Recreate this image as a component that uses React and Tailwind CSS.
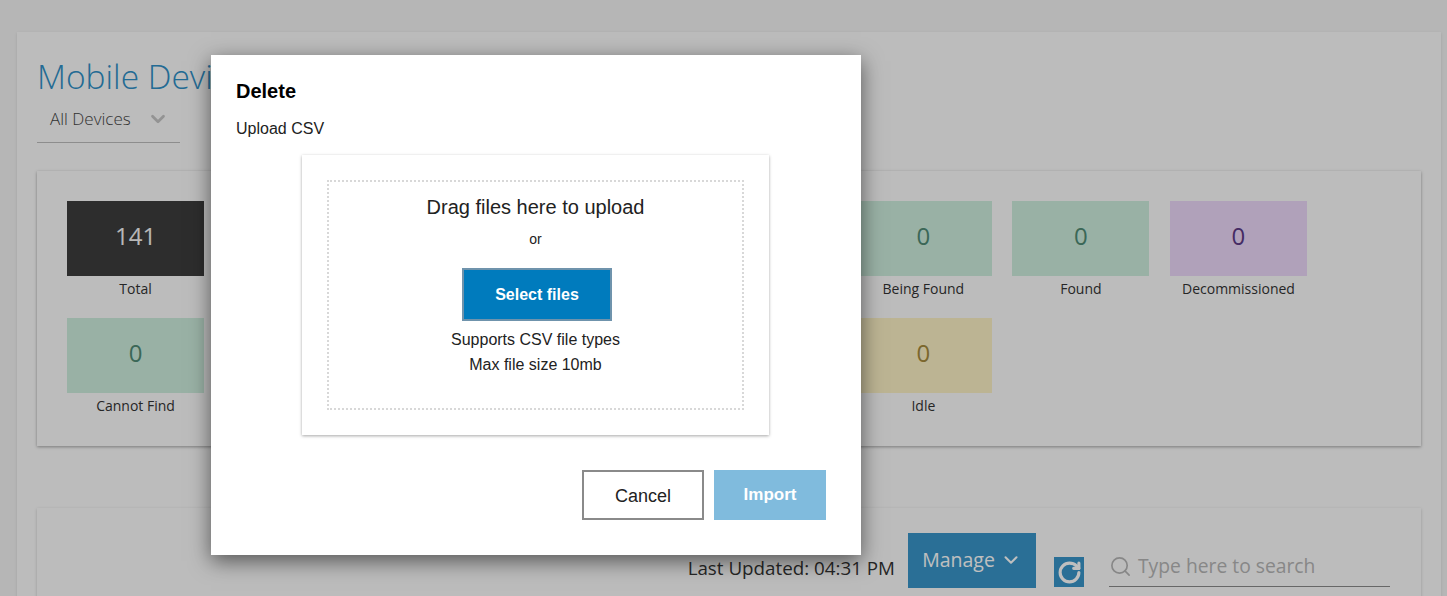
import React from "react";
import { ChevronDown, RotateCw, Search } from "lucide-react";

const tiles = [
  { label: "Total", value: "141", box: "bg-[#3c3c3c] text-[#f5f5f5]" },
  { label: "", value: "", box: "bg-[#cdeddd]" },
  { label: "", value: "", box: "bg-[#cdeddd]" },
  { label: "", value: "", box: "bg-[#cdeddd]" },
  { label: "", value: "", box: "bg-[#cdeddd]" },
  { label: "Being Found", value: "0", box: "bg-[#cdeddd] text-[#4f8a74]" },
  { label: "Found", value: "0", box: "bg-[#cdeddd] text-[#4f8a74]" },
  { label: "Decommissioned", value: "0", box: "bg-[#ebd7f9] text-[#5d3a86]" },
  { label: "Cannot Find", value: "0", box: "bg-[#cdeddd] text-[#4f8a74]" },
  { label: "", value: "", box: "bg-[#cdeddd]" },
  { label: "", value: "", box: "bg-[#cdeddd]" },
  { label: "", value: "", box: "bg-[#cdeddd]" },
  { label: "", value: "", box: "bg-[#cdeddd]" },
  { label: "Idle", value: "0", box: "bg-[#fbf1c5] text-[#a58a3c]" },
];

const Tile = ({ label, value, box }) => (
  <div className="flex flex-col items-center">
    <div className={`h-[75px] w-full flex items-center justify-center pb-[5px] text-[24px] ${box}`}>{value}</div>
    <div className="mt-[3px] h-[20px] text-[14px] leading-[20px] text-[#333333]">{label}</div>
  </div>
);

const App = () => {
  return (
    <div className="relative h-screen overflow-hidden bg-[#f3f3f3] pt-[32px] pl-[17px] pr-[6px] font-['Open_Sans',sans-serif]">
      <div className="h-[700px] bg-[#fbfbfb] px-[20px] pt-[24px] shadow-sm">
        <h1 className="h-[40px] text-[33.5px] font-light leading-[40px] text-[#2f8fc6]">Mobile Devices</h1>
        <div className="mt-[1px] flex h-[46px] w-[143px] items-center gap-[16px] border-b border-[#bdbdbd] pl-[13px] pb-[2px] text-[17px] font-light text-[#444444]">
          <span>All Devices</span>
          <ChevronDown className="h-[22px] w-[22px] text-[#c4c4c4]" strokeWidth={3} />
        </div>

        <div className="mt-[28px] h-[275px] bg-[#fbfbfb] pl-[30px] pt-[30px] pr-[114px] shadow-[0_1px_3px_rgba(0,0,0,0.35)]">
          <div className="grid grid-cols-8 gap-x-[20.5px] gap-y-[19px]">
            {tiles.map((tile, i) => (
              <Tile key={i} {...tile} />
            ))}
          </div>
        </div>

        <div className="mt-[62px] flex h-[200px] items-start justify-end bg-[#fbfbfb] pr-[31px] pt-[25px] shadow-[0_1px_3px_rgba(0,0,0,0.2)]">
          <span className="mt-[23px] text-[18.8px] leading-[24px] text-[#333333]">Last Updated: 04:31 PM</span>
          <button className="ml-[13px] flex h-[55px] w-[128px] items-center justify-center gap-[5px] bg-[#3895c9] pb-[2px] text-[19.5px] text-white">
            Manage
            <ChevronDown className="h-[22px] w-[22px]" strokeWidth={2.25} />
          </button>
          <button className="ml-[18px] mt-[24px] flex h-[30px] w-[30px] items-center justify-center bg-[#3895c9] text-white">
            <RotateCw className="h-[25px] w-[25px]" strokeWidth={3} />
          </button>
          <div className="ml-[25px] mt-[20px] flex h-[34px] w-[281px] items-center gap-[6px] border-b border-[#8a8a8a] pb-[6px] text-[19.3px] text-[#b5b5b5]">
            <Search className="h-[23px] w-[23px]" strokeWidth={1.75} />
            <span>Type here to search</span>
          </div>
        </div>
      </div>

      <div className="absolute inset-0 bg-black/25" />

      <div className="absolute left-[211px] top-[55px] flex h-[500px] w-[650px] flex-col bg-white px-[25px] pt-[25px] font-['Liberation_Sans',sans-serif] shadow-[0_6px_20px_rgba(0,0,0,0.55)]">
        <h2 className="text-[20px] font-bold leading-[22px] text-black">Delete</h2>
        <div className="mt-[18px] text-[16px] leading-[18px] text-[#222222]">Upload CSV</div>

        <div className="ml-[66px] mt-[17px] h-[280px] w-[467px] bg-white pl-[25px] pt-[25px] shadow-[0_1px_3px_rgba(0,0,0,0.35)]">
          <div className="flex h-[230px] w-[417px] flex-col items-center border-2 border-dotted border-[#d8d8d8] pt-[12px] text-[#222222]">
            <div className="text-[20px] leading-[26px]">Drag files here to upload</div>
            <div className="mt-[11px] text-[14px] leading-[16px]">or</div>
            <button className="mt-[21px] ml-[3px] h-[53px] w-[150px] border-2 border-[#6f93ac] bg-[#007bbd] text-[16px] font-bold text-white">
              Select files
            </button>
            <div className="mt-[6px] text-[16px] leading-[25px]">Supports CSV file types</div>
            <div className="text-[16px] leading-[25px]">Max file size 10mb</div>
          </div>
        </div>

        <div className="mt-[35px] flex justify-end gap-[10px] pr-[10px]">
          <button className="h-[50px] w-[122px] border-2 border-[#8a8a8a] bg-white pt-[3px] text-[18px] text-[#222222]">Cancel</button>
          <button className="h-[50px] w-[112px] bg-[#80bbdd] text-[17px] font-bold text-white">Import</button>
        </div>
      </div>
    </div>
  );
};

export default App;
